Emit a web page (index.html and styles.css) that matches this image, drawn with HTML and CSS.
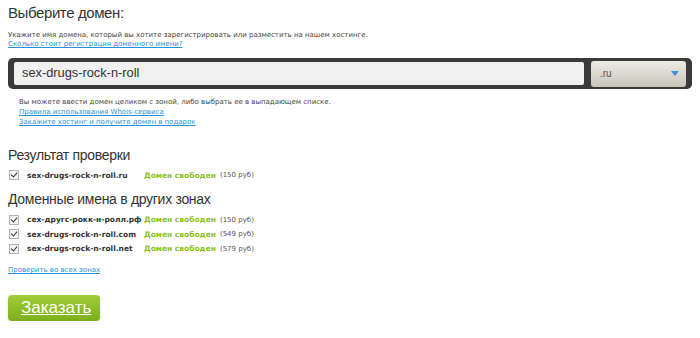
FILE: index.html
```html
<!DOCTYPE html>
<html lang="ru">
<head>
    <meta charset="UTF-8">
    <title>Выберите домен</title>
    <link rel="stylesheet" href="styles.css">
</head>
<body>
    <div class="container">
        <h2>Выберите домен:</h2>
        <div class="hint">
            <div>Укажите имя домена, который вы хотите зарегистрировать или разместить на нашем хостинге.</div>
            <div><a href="#">Сколько стоит регистрация доменного имени?</a></div>
        </div>

        <div class="search-bar">
            <div class="domain-input">sex-drugs-rock-n-roll</div>
            <div class="zone-select">
                <span>.ru</span>
                <svg width="8" height="5" viewBox="0 0 8 5"><path d="M0 0h8L4 5z" fill="#3d8fd6"/></svg>
            </div>
        </div>

        <div class="hint note">
            <div>Вы можете ввести домен целиком с зоной, либо выбрать ее в выпадающем списке.</div>
            <div><a href="#">Правила использования Whois-сервиса</a></div>
            <div><a href="#">Закажите хостинг и получите домен в подарок</a></div>
        </div>

        <h3 class="first">Результат проверки</h3>
        <div class="results">
            <div class="row"><span class="check"></span><b>sex-drugs-rock-n-roll.ru</b><span class="free">Домен свободен</span><span class="price">(150 руб)</span></div>
        </div>

        <h3 class="second">Доменные имена в других зонах</h3>
        <div class="results others">
            <div class="row"><span class="check"></span><b>сех-другс-рокк-н-ролл.рф</b><span class="free">Домен свободен</span><span class="price">(150 руб)</span></div>
            <div class="row"><span class="check"></span><b>sex-drugs-rock-n-roll.com</b><span class="free">Домен свободен</span><span class="price">(549 руб)</span></div>
            <div class="row"><span class="check"></span><b>sex-drugs-rock-n-roll.net</b><span class="free">Домен свободен</span><span class="price">(579 руб)</span></div>
        </div>

        <div class="hint all"><a href="#">Проверить во всех зонах</a></div>

        <a href="#" class="order">Заказать</a>
    </div>
</body>
</html>
```

FILE: styles.css
```css
body { margin: 0; background: #fff; color: #333; font-family: "Liberation Sans", Arial, sans-serif; }
.container { padding: 3px 8px 0 8px; }
h2 { margin: 0; font-size: 15px; letter-spacing: -0.4px; font-weight: normal; line-height: 20px; color: #333; }
h3 { margin: 0; font-size: 14px; letter-spacing: -0.3px; font-weight: normal; line-height: 18px; color: #333; }
.hint { margin-top: 8px; font-family: "DejaVu Sans", Verdana, sans-serif; font-size: 7px; line-height: 9px; color: #444; }
.hint div { height: 9px; white-space: nowrap; }
.hint a { color: #2a8fd6; }
.search-bar { display: flex; align-items: center; margin-top: 9px; height: 31px; box-sizing: border-box; background: #3a3a3a; border-radius: 5px; padding: 0 6px; }
.domain-input { flex: 1; height: 23px; margin-bottom: 1px; background: #f1f1f1; border-radius: 2px; font-size: 12.8px; line-height: 21px; padding-left: 8px; color: #333; }
.zone-select { width: 95px; height: 26px; margin-left: 7px; display: flex; align-items: center; justify-content: space-between; padding: 0 7px 0 9px; box-sizing: border-box; border-radius: 3px; background: linear-gradient(#ecebe5, #c8c5bb); font-size: 10px; color: #555; }
.note { margin: 8px 0 0 11px; line-height: 10px; }
.note div { height: 10px; }
.first { margin-top: 19px; }
.results { margin-top: 4px; }
.second { margin-top: 7px; }
.others { margin-top: 5px; }
.row { display: flex; align-items: center; height: 14.5px; font-family: "DejaVu Sans", Verdana, sans-serif; font-size: 7.5px; }
.check { flex: none; width: 8px; height: 8px; margin: 0 8px 0 1px; border: 1px solid #b5b5b5; background: #f4f4f4; position: relative; }
.check::after { content: ""; position: absolute; left: 2px; top: 0; width: 3px; height: 5px; border: solid #333; border-width: 0 1.5px 1.5px 0; transform: rotate(40deg); }
.row b { width: 117px; color: #333; white-space: nowrap; }
.free { color: #8cbf26; font-weight: bold; }
.price { margin-left: 4px; color: #555; font-size: 7px; }
.all { margin-top: 9px; }
.all a { display: block; height: 10px; line-height: 10px; }
.order { display: block; margin-top: 20px; width: 92px; height: 26px; box-sizing: border-box; padding-left: 13px; border-radius: 4px; background: linear-gradient(#a0cd3b, #7baf19); color: #fff; font-size: 17px; line-height: 25px; box-shadow: 0 2px 3px rgba(0,0,0,0.15); }
```
